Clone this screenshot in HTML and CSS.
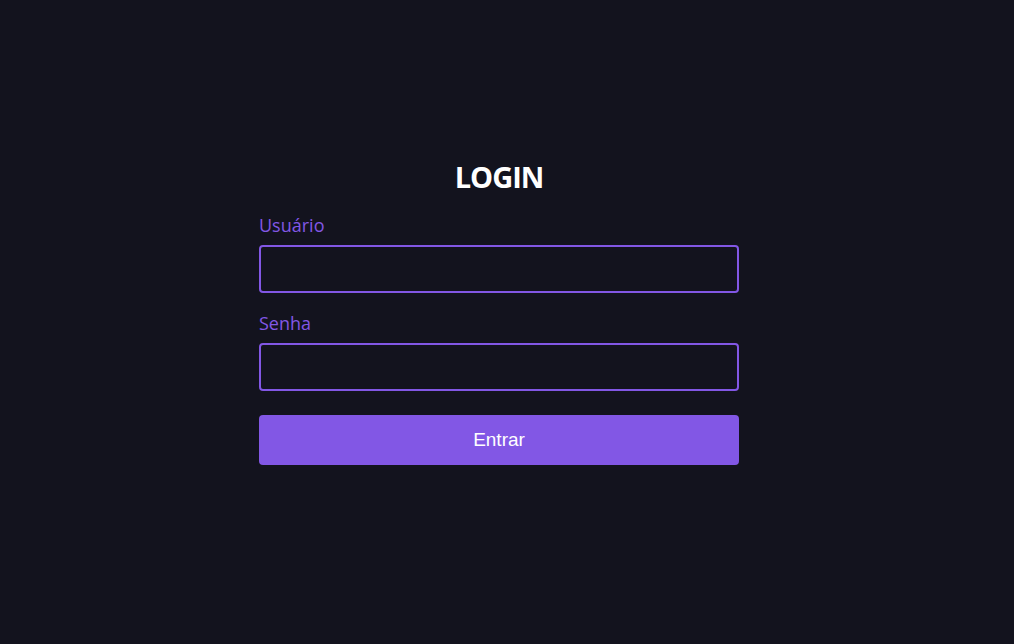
FILE: index.html
```html
<!DOCTYPE html>
<html lang="pt-BR">
<head>
<meta charset="utf-8">
<title>Login</title>
<link rel="stylesheet" href="styles.css">
</head>
<body>
<main class="page">
  <form class="login">
    <h1 class="title">LOGIN</h1>
    <div class="field">
      <label class="label" for="user">Usuário</label>
      <input class="input" id="user" type="text">
    </div>
    <div class="field">
      <label class="label" for="pass">Senha</label>
      <input class="input" id="pass" type="password">
    </div>
    <button class="btn" type="button">Entrar</button>
  </form>
</main>
</body>
</html>
```
FILE: styles.css
```css
* { box-sizing: border-box; }
html, body { margin: 0; padding: 0; }
body {
  background: #13131e;
  font-family: "Open Sans", "Noto Sans", sans-serif;
}
.page {
  min-height: 100vh;
  display: flex;
  align-items: center;
  justify-content: center;
  padding-bottom: 20px;
  padding-right: 16px;
}
.login {
  width: 480px;
  display: flex;
  flex-direction: column;
}
.title {
  margin: 0 0 18px;
  font-size: 29px;
  line-height: 36px;
  font-weight: 700;
  letter-spacing: -1px;
  color: #ffffff;
  text-align: center;
}
.field {
  display: flex;
  flex-direction: column;
  gap: 8px;
  margin-bottom: 18px;
}
.field + .field { margin-bottom: 0; }
.label {
  font-size: 18px;
  line-height: 24px;
  color: #8257e5;
}
.input {
  height: 48px;
  border: 2px solid #8257e5;
  border-radius: 4px;
  background: transparent;
  color: #fff;
  font-size: 16px;
  padding: 0 12px;
  outline: none;
}
.btn {
  margin-top: 24px;
  height: 50px;
  border: none;
  border-radius: 4px;
  background: #8257e5;
  color: #ffffff;
  font-family: "Liberation Sans", Arial, sans-serif;
  font-size: 19px;
  cursor: pointer;
}
```
